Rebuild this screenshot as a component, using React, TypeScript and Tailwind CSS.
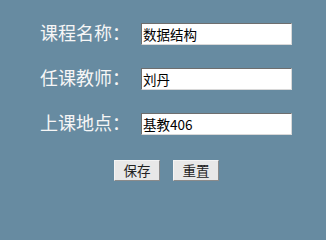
import React from "react";

const rows = [
  { label: "课程名称：", value: "数据结构" },
  { label: "任课教师：", value: "刘丹" },
  { label: "上课地点：", value: "基教406" },
];

export default function App() {
  return (
    <div className="w-full min-h-screen bg-[#678ba1] overflow-hidden pt-[23px]">
      <div className="flex flex-col gap-[23px] pl-[40px]">
        {rows.map((r) => (
          <div key={r.label} className="flex items-center h-[22px]">
            <span className="w-[101px] text-[18px] leading-[22px] text-[#f6f6f6] [font-family:'Liberation_Serif','Noto_Sans_CJK_SC',serif] whitespace-nowrap">
              {r.label}
            </span>
            <div className="w-[151px] h-[22px] bg-white border border-t-[#6e6e6e] border-l-[#6e6e6e] border-r-[#d8d8d8] border-b-[#d8d8d8] flex items-center pl-[1px] text-[13.5px] text-black [font-family:'Noto_Sans_CJK_SC',sans-serif]">
              {r.value}
            </div>
          </div>
        ))}
      </div>
      <div className="flex justify-center gap-[13px] pl-[7px] mt-[25px]">
        <button className="w-[46px] h-[21px] bg-[#e8e8e8] border border-t-[#f4f4f4] border-l-[#f4f4f4] border-r-[#8a8a8a] border-b-[#8a8a8a] text-[13.5px] leading-none text-[#222] [font-family:'Noto_Sans_CJK_SC',sans-serif]">
          保存
        </button>
        <button className="w-[46px] h-[21px] bg-[#e8e8e8] border border-t-[#f4f4f4] border-l-[#f4f4f4] border-r-[#8a8a8a] border-b-[#8a8a8a] text-[13.5px] leading-none text-[#222] [font-family:'Noto_Sans_CJK_SC',sans-serif]">
          重置
        </button>
      </div>
    </div>
  );
}
